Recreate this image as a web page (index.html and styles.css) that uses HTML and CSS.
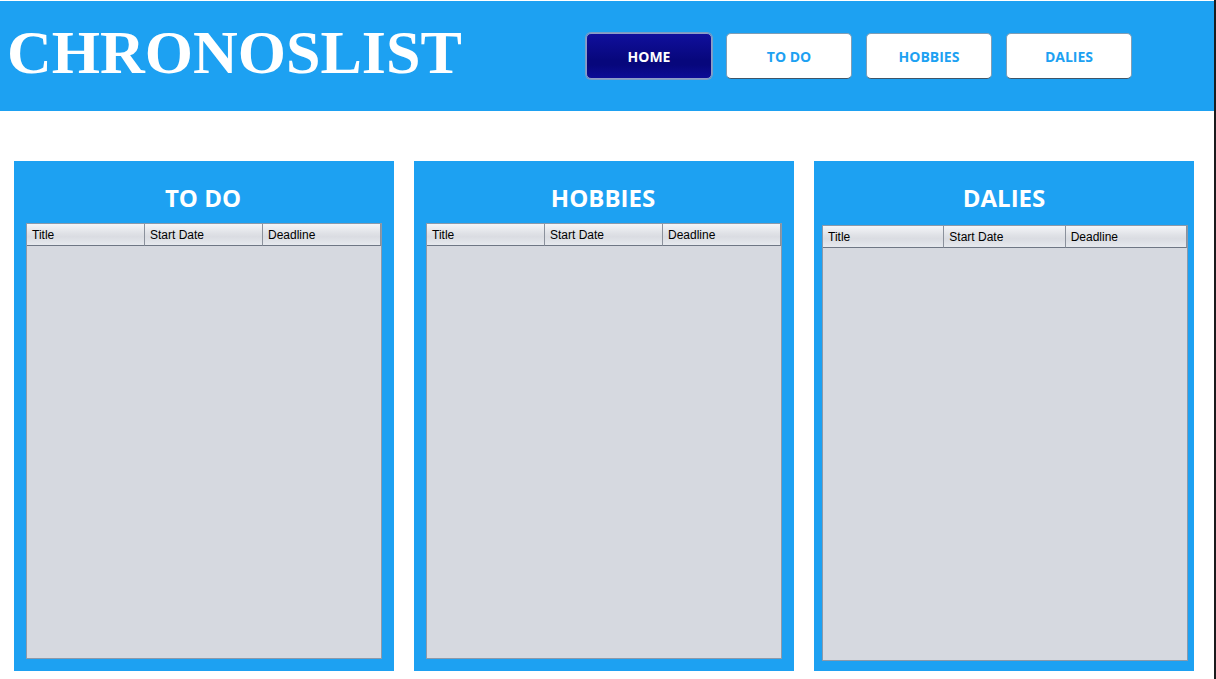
FILE: index.html
```html
<!DOCTYPE html>
<html lang="en">
<head>
<meta charset="utf-8">
<meta name="viewport" content="width=device-width, initial-scale=1">
<title>Chronoslist</title>
<link rel="stylesheet" href="styles.css">
</head>
<body>
<header class="header">
  <h1 class="brand">CHRONOSLIST</h1>
  <nav class="nav">
    <button class="nav-button active" type="button">HOME</button>
    <button class="nav-button" type="button">TO DO</button>
    <button class="nav-button" type="button">HOBBIES</button>
    <button class="nav-button" type="button">DALIES</button>
  </nav>
</header>
<main class="board">
  <section class="panel">
    <h2 class="panel-title">TO DO</h2>
    <div class="table-area">
      <table class="tasks">
        <thead><tr><th>Title</th><th>Start Date</th><th>Deadline</th></tr></thead>
      </table>
    </div>
  </section>
  <section class="panel">
    <h2 class="panel-title">HOBBIES</h2>
    <div class="table-area">
      <table class="tasks">
        <thead><tr><th>Title</th><th>Start Date</th><th>Deadline</th></tr></thead>
      </table>
    </div>
  </section>
  <section class="panel panel-wide">
    <h2 class="panel-title">DALIES</h2>
    <div class="table-area">
      <table class="tasks">
        <thead><tr><th>Title</th><th>Start Date</th><th>Deadline</th></tr></thead>
      </table>
    </div>
  </section>
</main>
</body>
</html>
```
FILE: styles.css
```css
* {
  box-sizing: border-box;
}

body {
  display: flex;
  flex-direction: column;
  min-height: 100vh;
  margin: 0;
  padding-top: 1px;
  border-right: 2px solid #1b1b1d;
  background: #fff;
  font-family: "Open Sans", "Noto Sans", sans-serif;
}

.header {
  display: flex;
  align-items: flex-start;
  justify-content: space-between;
  min-height: 110px;
  padding: 16px 82px 16px 7px;
  background: #1da1f2;
}

.brand {
  margin: 0;
  color: #fff;
  font: bold 62px/70px "Liberation Serif", serif;
}

.nav {
  display: flex;
  gap: 14px;
  padding-top: 16px;
}

.nav-button {
  width: 126px;
  height: 46px;
  padding: 2px 0 0;
  border: 1px solid #7f9db5;
  border-bottom-color: #3f5568;
  border-radius: 5px;
  background: #fff;
  color: #1da1f2;
  font: bold 14px/20px "Open Sans", "Noto Sans", sans-serif;
}

.nav-button.active {
  border-color: #8e9cc8;
  background: linear-gradient(#100f9c, #07077c 60%, #07077c 70%, #0c0c96);
  box-shadow: 0 0 0 1px #7a9cc4;
  color: #fff;
}

.board {
  display: grid;
  flex: 1;
  grid-template-columns: repeat(3, 1fr);
  gap: 20px;
  padding: 50px 20px 8px 14px;
}

.panel {
  display: flex;
  flex-direction: column;
  padding: 20px 12px 12px;
  background: #1da1f2;
}

.panel-wide {
  padding: 20px 6px 10px 8px;
}

.panel-title {
  margin: 0 0 8px;
  padding-right: 2px;
  color: #fff;
  font-size: 24px;
  line-height: 34px;
  text-align: center;
}

.panel-wide .panel-title {
  margin-bottom: 10px;
}

.table-area {
  flex: 1;
  border: 1px solid #8b99aa;
  background: #d6d9e0;
}

.tasks {
  width: 100%;
  border-collapse: separate;
  border-spacing: 0;
  table-layout: fixed;
}

.tasks th {
  height: 22px;
  padding: 0 5px;
  border-right: 1px solid #8b919c;
  border-bottom: 1px solid #6f7785;
  background: linear-gradient(#f4f5f8, #dfe1e6 45%, #dadce2 60%, #e6e9ee);
  color: #000;
  font: 12px/16px "Liberation Sans", Arial, sans-serif;
  text-align: left;
}
```
